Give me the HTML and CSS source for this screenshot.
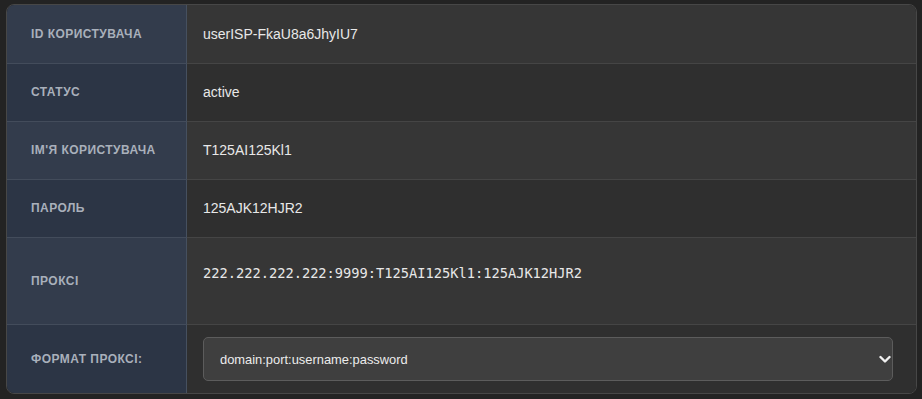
FILE: index.html
```html
<!DOCTYPE html>
<html lang="uk">
<head>
<meta charset="utf-8">
<title>Користувач</title>
<link rel="stylesheet" href="styles.css">
</head>
<body>
<div class="card">
  <table class="info">
    <tbody>
      <tr class="odd first">
        <th>ID користувача</th>
        <td>userISP-FkaU8a6JhyIU7</td>
      </tr>
      <tr class="even">
        <th>Статус</th>
        <td>active</td>
      </tr>
      <tr class="odd">
        <th>Ім'я користувача</th>
        <td>T125AI125Kl1</td>
      </tr>
      <tr class="even">
        <th>Пароль</th>
        <td>125AJK12HJR2</td>
      </tr>
      <tr class="odd">
        <th>Проксі</th>
        <td><pre class="proxy">222.222.222.222:9999:T125AI125Kl1:125AJK12HJR2</pre></td>
      </tr>
      <tr class="even last">
        <th>Формат проксі:</th>
        <td class="select-cell">
          <div class="select-wrap">
            <select class="select">
              <option>domain:port:username:password</option>
            </select>
            <svg class="chev" width="12" height="9" viewBox="0 0 12 9"><path d="M1.5 2 L6 6.5 L10.5 2" fill="none" stroke="#f0f0f0" stroke-width="2.4" stroke-linecap="round" stroke-linejoin="round"/></svg>
          </div>
        </td>
      </tr>
    </tbody>
  </table>
</div>
</body>
</html>
```

FILE: styles.css
```css
html, body {
  margin: 0;
  padding: 0;
  background: #232323;
}
body {
  padding: 4px 5px 0 6px;
  font-family: "Liberation Sans", Arial, sans-serif;
}
.card {
  width: 911px;
  box-sizing: border-box;
  border: 1px solid #474747;
  border-radius: 8px;
  overflow: hidden;
}
.info {
  width: 100%;
  border-collapse: collapse;
  table-layout: fixed;
}
.info th {
  width: 155px;
  text-align: left;
  padding: 18px 0 18px 24px;
  font-size: 12px;
  line-height: 21px;
  font-weight: bold;
  text-transform: uppercase;
  letter-spacing: 0.45px;
  color: #a9b0bb;
  border-right: 1px solid #46505f;
  vertical-align: middle;
}
.info td {
  padding: 18px 23px 18px 16px;
  font-size: 14px;
  line-height: 21px;
  color: #e8e8e8;
  vertical-align: middle;
}
.info tr.first th,
.info tr.first td {
  padding-top: 19px;
}
.info tr {
  border-bottom: 1px solid #454545;
}
.info tr.last {
  border-bottom: none;
}
.info tr th {
  border-bottom: 1px solid #434c5b;
}
.info tr.last th {
  border-bottom: none;
}
.odd th { background: #333c4c; }
.odd td { background: #363636; }
.even th { background: #2c3545; }
.even td { background: #2f2f2f; }
.proxy {
  margin: 7px 0 23px;
  font-family: "DejaVu Sans Mono", "Liberation Mono", monospace;
  font-size: 13.7px;
  line-height: 20px;
  color: #e8e8e8;
}
.info td.select-cell {
  padding-top: 12px;
  padding-bottom: 12px;
}
.select-wrap {
  position: relative;
}
.select {
  display: block;
  width: 100%;
  height: 44px;
  box-sizing: border-box;
  appearance: none;
  -webkit-appearance: none;
  background: #3f3f3f;
  border: 1px solid #5c5c5c;
  border-radius: 5px;
  color: #ececec;
  font-family: "Liberation Sans", Arial, sans-serif;
  font-size: 12.9px;
  padding: 0 30px 0 16px;
  outline: none;
}
.chev {
  position: absolute;
  right: 2px;
  top: 18px;
  pointer-events: none;
}
```
